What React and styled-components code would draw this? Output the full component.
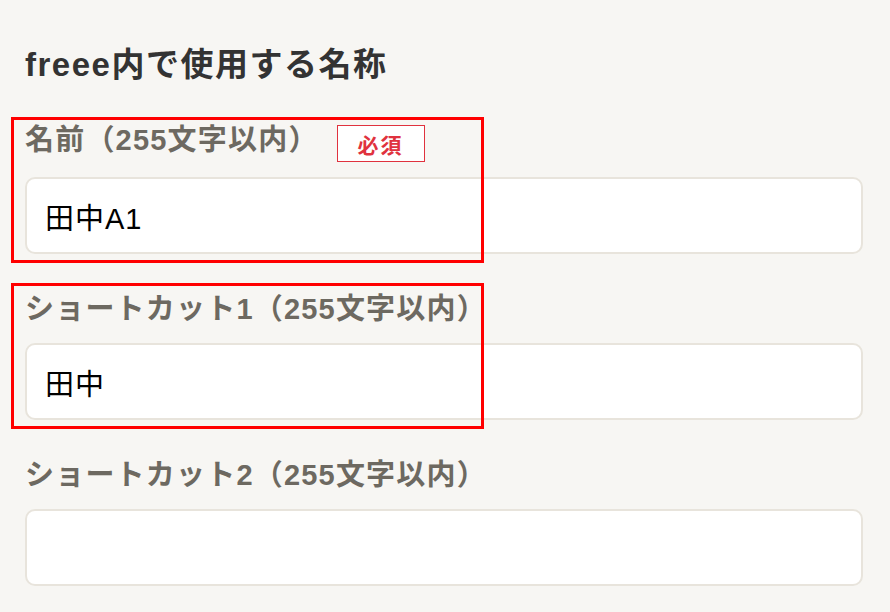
import React from "react";
import styled, { createGlobalStyle } from "styled-components";

const Global = createGlobalStyle`
  html, body {
    margin: 0;
    padding: 0;
    background: #f7f6f3;
  }
  body {
    font-family: "Liberation Sans", "Noto Sans CJK JP", sans-serif;
  }
`;

const Page = styled.div`
  box-sizing: border-box;
  width: 890px;
  min-height: 612px;
  padding: 45px 27px 0 25px;
  background: #f7f6f3;
  display: flex;
  flex-direction: column;
  gap: 36px;
`;

const Heading = styled.h2`
  margin: 0;
  font-size: 33px;
  line-height: 40px;
  font-weight: 700;
  color: #333333;
  letter-spacing: 1.5px;
`;

const Field = styled.div`
  position: relative;
  display: flex;
  flex-direction: column;
  gap: 15px;
`;

const LabelRow = styled.div`
  display: flex;
  align-items: flex-start;
`;

const Label = styled.label`
  font-size: 29px;
  line-height: 38px;
  font-weight: 700;
  color: #6d6961;
  letter-spacing: 1.2px;
`;

const Badge = styled.span`
  box-sizing: border-box;
  display: flex;
  align-items: center;
  justify-content: center;
  width: 88px;
  height: 37px;
  margin: 4px 0 0 18px;
  border: 1.5px solid #e0323e;
  background: #ffffff;
  color: #e0323e;
  font-size: 21px;
  font-weight: 700;
  letter-spacing: 2px;
`;

const Input = styled.input`
  box-sizing: border-box;
  width: 100%;
  height: 77px;
  padding: 0 18px;
  border: 2px solid #e8e4dc;
  border-radius: 10px;
  background: #ffffff;
  color: #000000;
  font-family: "Liberation Sans", "Noto Sans CJK JP", sans-serif;
  font-size: 29px;
  letter-spacing: 1px;
  outline: none;
`;

const Highlight = styled.div`
  position: absolute;
  left: -14px;
  bottom: -9px;
  width: 473px;
  height: 146px;
  box-sizing: border-box;
  border: 3px solid #ff0000;
  pointer-events: none;
`;

const fields = [
  { label: "名前（255文字以内）", value: "田中A1", required: true, marked: true },
  { label: "ショートカット1（255文字以内）", value: "田中", marked: true },
  { label: "ショートカット2（255文字以内）", value: "" },
];

export default function App() {
  return (
    <>
      <Global />
      <Page>
        <Heading>freee内で使用する名称</Heading>
        {fields.map((f) => (
          <Field key={f.label}>
            <LabelRow>
              <Label>{f.label}</Label>
              {f.required && <Badge>必須</Badge>}
            </LabelRow>
            <Input value={f.value} readOnly />
            {f.marked && <Highlight />}
          </Field>
        ))}
      </Page>
    </>
  );
}
